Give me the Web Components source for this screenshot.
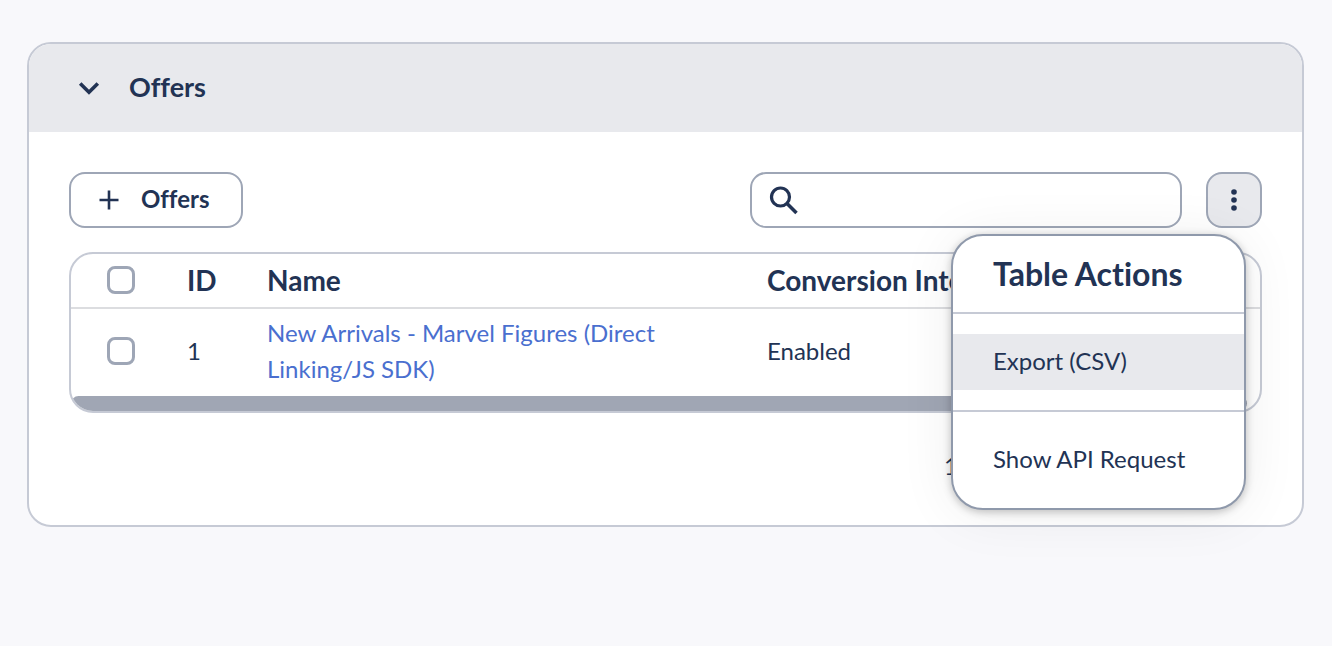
<!DOCTYPE html>
<html lang="en">
<head>
<meta charset="utf-8">
<title>Offers</title>
<style>
body{margin:0;padding:42px 28px 40px 27px;background:#f8f8fb;color:#223354;font:400 24px/36px Lato,"Open Sans",sans-serif;font-variant-ligatures:none;--line:#c6cad5;--control:#9ea6b6;--fill:#e8e9ed;--link:#4a6fcf}
</style>
</head>
<body>
<section-card heading="Offers">
  <table-toolbar>
    <add-button slot="start">Offers</add-button>
    <search-box></search-box>
    <actions-menu></actions-menu>
  </table-toolbar>
  <offers-table></offers-table>
  <page-status>1</page-status>
</section-card>
<script>
function define(name, html, setup){
  const t=document.createElement('template');
  t.innerHTML='<style>*,*::before{box-sizing:border-box}button,input{font:inherit;font-variant-ligatures:none;color:inherit;margin:0}svg{display:block;flex:none}</style>'+html;
  customElements.define(name,class extends HTMLElement{
    constructor(){super();const r=this.attachShadow({mode:'open'});r.append(t.content.cloneNode(true));if(setup)setup(this,r)}
  });
}
define('section-card',`<style>
:host{display:block;background:#fff;border:2px solid var(--line);border-radius:24px}
h2{margin:0;background:var(--fill);border-radius:22px 22px 0 0}
button{display:flex;align-items:center;gap:28px;width:100%;height:88px;padding:0 48px;border:0;background:none;font-size:27px;font-weight:700;text-align:left}
span{padding-bottom:2px}
.body{display:flex;flex-direction:column;gap:24px;padding:40px}
</style>
<h2><button aria-expanded="true"><svg width="24" height="24" viewBox="0 0 24 24" fill="none" stroke="currentColor" stroke-width="3.600"><path d="M3.200 7.500 12 16.300l8.800-8.800"/></svg><span></span></button></h2>
<div class="body"><slot></slot></div>`,(h,r)=>r.querySelector('span').textContent=h.getAttribute('heading'));
define('table-toolbar',`<style>
:host{display:flex;gap:24px}
.start{margin-right:auto}
</style><div class="start"><slot name="start"></slot></div><slot></slot>`);
define('add-button',`<style>
:host{display:block}
button{display:flex;align-items:center;gap:20px;height:56px;padding:0 32px 0 26px;border:2px solid var(--control);border-radius:16px;background:#fff;font-weight:700}
span{padding-bottom:2px}
</style><button><svg width="24" height="24" viewBox="0 0 24 24" stroke="currentColor" stroke-width="2.600"><path d="M12 2.500v19M2.500 12h19"/></svg><span><slot></slot></span></button>`);
define('search-box',`<style>
:host{display:block;flex:0 1 432px}
label{display:flex;align-items:center;gap:16px;height:56px;padding:0 16px;border:2px solid var(--control);border-radius:16px;background:#fff}
input{flex:1;min-width:0;border:0;outline:0;background:none;padding:0}
</style><label><svg width="32" height="32" viewBox="0 0 32 32" fill="none" stroke="currentColor"><circle cx="12.500" cy="13" r="9" stroke-width="3.200"/><path d="m19 19.500 9.500 9.500" stroke-width="3.600"/></svg><input type="search" aria-label="Search offers"></label>`);
define('actions-menu',`<style>
:host{display:block;position:relative;z-index:1}
.toggle{display:grid;place-items:center;width:56px;height:56px;padding:0;border:2px solid var(--control);border-radius:16px;background:var(--fill)}
.menu{position:absolute;top:62px;right:16px;width:295px;border:2px solid #8f99ab;border-radius:32px;background:#fff;overflow:hidden;box-shadow:0 2px 8px rgba(0,0,0,.24),0 4px 56px rgba(0,0,0,.07)}
h3{margin:0;padding:19px 40px;font-size:32px;line-height:38px;font-weight:700;white-space:nowrap}
.group{padding:20px 0;border-top:2px solid var(--line)}
.group button{display:block;width:100%;height:56px;padding:0 40px 2px;border:0;background:none;text-align:left;white-space:nowrap}
.group .active{background:var(--fill)}
</style>
<button class="toggle" aria-label="Table actions" aria-expanded="true"><svg width="24" height="24" viewBox="0 0 24 24" fill="currentColor"><circle cx="12" cy="4" r="2.800"/><circle cx="12" cy="12" r="2.800"/><circle cx="12" cy="20" r="2.800"/></svg></button>
<div class="menu"><h3>Table Actions</h3>
<div class="group"><button class="active">Export (CSV)</button></div>
<div class="group"><button>Show API Request</button></div></div>`);
define('offers-table',`<style>
:host{display:block;border:2px solid var(--line);border-radius:24px;overflow:hidden}
table{width:100%;table-layout:fixed;border-collapse:separate;border-spacing:0}
.check{width:100px}.id{width:80px}.name{width:500px}
th,td{padding:0 16px;text-align:left;vertical-align:middle}
th{height:55px;padding-bottom:2px;border-bottom:2px solid #dcdde0;font-size:28px;font-weight:700;white-space:nowrap}
td{height:87px;padding-top:6px;padding-bottom:9px}
th:first-child,td:first-child{padding-left:36px}
input{appearance:none;display:block;width:28px;height:28px;border:3px solid var(--control);border-radius:8px;background:#fff}
a{color:var(--link);text-decoration:none}
.thumb{height:15px;margin-right:13px;border-radius:8px;background:#a0a6b4}
</style>
<table><colgroup><col class="check"><col class="id"><col class="name"><col></colgroup>
<thead><tr><th><input type="checkbox" aria-label="Select all"></th><th>ID</th><th>Name</th><th>Conversion Integ</th></tr></thead>
<tbody><tr><td><input type="checkbox" aria-label="Select offer 1"></td><td>1</td><td><a href="#offer-1">New Arrivals - Marvel Figures (Direct Linking/JS SDK)</a></td><td>Enabled</td></tr></tbody></table>
<div class="thumb"></div>`);
define('page-status',`<style>
:host{display:flex;justify-content:flex-end;padding:11px 304px 1px 0}
</style><slot></slot>`);
</script>
</body>
</html>
